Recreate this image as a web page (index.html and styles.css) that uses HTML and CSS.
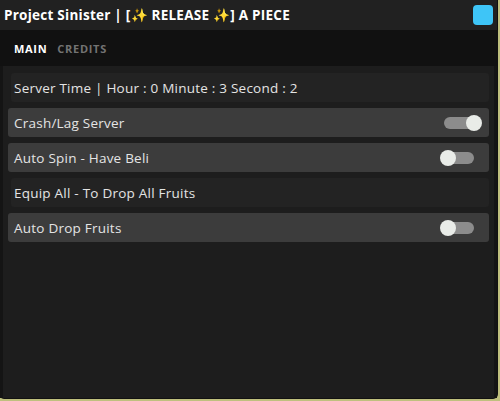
FILE: index.html
```html
<!DOCTYPE html>
<html lang="en">
<head>
  <meta charset="UTF-8">
  <title>Project Sinister</title>
  <link rel="stylesheet" href="styles.css">
</head>
<body>
  <div class="window">
    <div class="titlebar">
      <span class="title">Project Sinister | [✨ RELEASE ✨] A PIECE</span>
      <span class="minimize"></span>
    </div>
    <div class="tabs">
      <span class="tab active">MAIN</span>
      <span class="tab">CREDITS</span>
    </div>
    <div class="content">
      <div class="row label">Server Time | Hour : 0 Minute : 3 Second : 2</div>
      <div class="row toggle-row">Crash/Lag Server <span class="toggle on"><span class="knob"></span></span></div>
      <div class="row toggle-row">Auto Spin - Have Beli <span class="toggle"><span class="knob"></span></span></div>
      <div class="row label">Equip All - To Drop All Fruits</div>
      <div class="row toggle-row">Auto Drop Fruits <span class="toggle"><span class="knob"></span></span></div>
    </div>
  </div>
</body>
</html>
```

FILE: styles.css
```css
html, body {
  margin: 0;
  padding: 0;
}
body {
  width: 500px;
  height: 401px;
  background: #bfc07e;
  font-family: "Open Sans", "Noto Sans", sans-serif;
  overflow: hidden;
}
.window {
  width: 497px;
  height: 398px;
  background: #1d1d1d;
  border-radius: 0 0 4px 4px;
  box-shadow: 0 0 0 1px #111;
  display: flex;
  flex-direction: column;
}
.titlebar {
  height: 30px;
  background: #212121;
  display: flex;
  align-items: center;
  justify-content: space-between;
  padding: 0 4px 0 4px;
}
.title {
  color: #fff;
  font-weight: 700;
  font-size: 13.5px;
  letter-spacing: 0.25px;
}
.minimize {
  width: 20px;
  height: 20px;
  border-radius: 4px;
  background: #3ec5f7;
}
.tabs {
  height: 36px;
  background: #111;
  display: flex;
  align-items: center;
  gap: 10px;
  padding: 0 14px;
}
.tab {
  font-size: 11px;
  font-weight: 700;
  letter-spacing: 0.7px;
  color: #737373;
}
.tab.active {
  color: #fff;
}
.content {
  flex: 1;
  padding: 7px 5px 0 8px;
  display: flex;
  flex-direction: column;
  gap: 6px;
  border-left: 3px solid #141414;
  border-right: 3px solid #141414;
}
.row {
  height: 29px;
  padding: 0 0 0 3px;
  display: flex;
  align-items: center;
  justify-content: space-between;
  font-size: 13.5px;
  letter-spacing: 0.23px;
  color: #e4e4e4;
  border-radius: 3px;
}
.row.label {
  background: #232323;
}
.row.toggle-row {
  background: #3c3c3c;
  margin-left: -3px;
  padding-left: 6px;
}
.toggle {
  position: relative;
  width: 30px;
  height: 12px;
  border-radius: 6px;
  background: #8c8c8c;
  margin-right: 15px;
}
.knob {
  position: absolute;
  top: -2px;
  left: -4px;
  width: 16px;
  height: 16px;
  border-radius: 50%;
  background: #e9ece8;
}
.toggle.on .knob {
  left: auto;
  right: -8px;
}
```
